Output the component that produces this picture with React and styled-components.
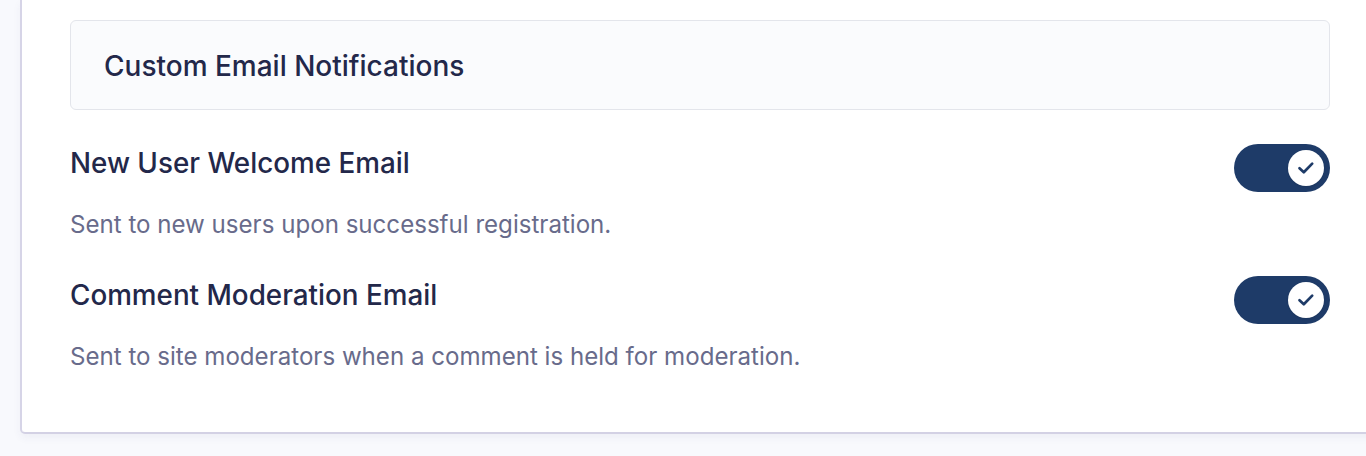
import React from "react";
import styled, { createGlobalStyle } from "styled-components";

const Global = createGlobalStyle`
  html, body {
    margin: 0;
    padding: 0;
    background: #f8f9fd;
    overflow: hidden;
    font-family: Inter, "Noto Sans", sans-serif;
  }
`;

const Page = styled.div`
  padding-left: 20px;
  width: 1366px;
  height: 456px;
  box-sizing: border-box;
  overflow: hidden;
`;

const Card = styled.section`
  width: 1360px;
  box-sizing: border-box;
  background: #ffffff;
  border-left: 2px solid #d6d4e7;
  border-bottom: 2px solid #d3d1e4;
  border-bottom-left-radius: 5px;
  box-shadow: 0 4px 8px rgba(60, 60, 110, 0.05);
  padding: 20px 0 60px 48px;
`;

const SectionHeader = styled.div`
  width: 1260px;
  height: 90px;
  box-sizing: border-box;
  background: #fafbfd;
  border: 1.5px solid #e3e5eb;
  border-radius: 6px;
  display: flex;
  align-items: center;
  padding-left: 33px;
  padding-top: 1px;
`;

const HeaderTitle = styled.h2`
  margin: 0;
  font-size: 28px;
  line-height: 36px;
  font-weight: 500;
  color: #23284a;
`;

const Item = styled.div`
  width: 1260px;
  margin-top: ${(p) => p.$gap}px;
`;

const ItemRow = styled.div`
  display: flex;
  justify-content: space-between;
  align-items: flex-start;
  height: 48px;
`;

const ItemTitle = styled.h3`
  margin: 1px 0 0;
  font-size: 27.8px;
  line-height: 36px;
  font-weight: 500;
  color: #23284a;
`;

const ItemDesc = styled.p`
  margin: 18px 0 0;
  font-size: 24.1px;
  line-height: 30px;
  font-weight: 400;
  color: #686b8b;
`;

const Toggle = styled.button`
  width: 96px;
  height: 48px;
  border: none;
  border-radius: 24px;
  background: #1e3b68;
  padding: 0 6px;
  display: flex;
  align-items: center;
  justify-content: ${(p) => (p.$on ? "flex-end" : "flex-start")};
  cursor: pointer;
`;

const Knob = styled.span`
  width: 36px;
  height: 36px;
  border-radius: 50%;
  background: #ffffff;
  display: flex;
  align-items: center;
  justify-content: center;
  box-shadow: 0 1px 2px rgba(0, 0, 0, 0.1);
`;

const Check = () => (
  <svg width="18" height="18" viewBox="0 0 18 18" fill="none">
    <path
      d="M2.5 9.2 L6.8 13.2 L15.2 4.6"
      stroke="#1e3b68"
      strokeWidth="2.7"
      strokeLinecap="round"
      strokeLinejoin="round"
    />
  </svg>
);

const items = [
  {
    title: "New User Welcome Email",
    desc: "Sent to new users upon successful registration.",
    gap: 34,
  },
  {
    title: "Comment Moderation Email",
    desc: "Sent to site moderators when a comment is held for moderation.",
    gap: 36,
  },
];

export default function App() {
  return (
    <>
      <Global />
      <Page>
        <Card>
          <SectionHeader>
            <HeaderTitle>Custom Email Notifications</HeaderTitle>
          </SectionHeader>
          {items.map((it) => (
            <Item key={it.title} $gap={it.gap}>
              <ItemRow>
                <ItemTitle>{it.title}</ItemTitle>
                <Toggle $on aria-pressed="true">
                  <Knob>
                    <Check />
                  </Knob>
                </Toggle>
              </ItemRow>
              <ItemDesc>{it.desc}</ItemDesc>
            </Item>
          ))}
        </Card>
      </Page>
    </>
  );
}
